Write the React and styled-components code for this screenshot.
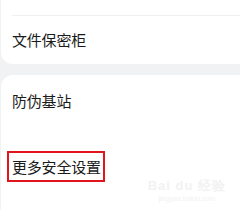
import styled, { createGlobalStyle, css } from "styled-components";

const Global = createGlobalStyle`
html, body {
  margin: 0;
  padding: 0;
  background: #f1f2f4;
  overflow: hidden;
}
body {
  font-family: "Noto Sans CJK SC", "Noto Sans", sans-serif;
}
`

const Page = styled.div`
position: relative;
width: 240px;
height: 210px;
overflow: hidden;
display: flex;
flex-direction: column;
gap: 11px;
`

const Card = styled.div`
background: #ffffff;
margin-left: 1px;
margin-right: -14px;
border-radius: 12px;
display: flex;
flex-direction: column;
flex-shrink: 0;
${( { top } ) => top && css`
margin-top: -31px;
`};
${( { grow } ) => grow && css`
flex-grow: 1;
margin-bottom: -14px;
`};
`

const Row = styled.div`
height: ${( { h } ) => h}px;
display: flex;
align-items: center;
padding-left: 11px;
${( { divided } ) => divided && css`
  border-bottom: 1px solid #f0f0f2;
  margin-left: 11px;
  padding-left: 0;
`};
`

const Label = styled.span`
font-size: 15px;
line-height: 20px;
color: #1b1b1b;
letter-spacing: -0.2px;
${( { marked } ) => marked && css`
  border: 2px solid #e2141c;
  padding: 4px 2px 3px 3px;
  margin-left: -5px;
  margin-top: 2px;
`};
`

const Watermark = styled.div`
position: absolute;
right: 14px;
bottom: 8px;
display: flex;
flex-direction: column;
align-items: center;
color: #f2f2f2;
font-family: "Liberation Sans", sans-serif;
`

const Mark = styled.div`
font-size: 13px;
font-weight: bold;
letter-spacing: 1px;
`

const Url = styled.div`
font-size: 7px;
`

const App = () => {
    return (
        <>
            <Global />
            <Page>
                <Card top>
                    <Row h={46} divided>
                        <Label>应用锁</Label>
                    </Row>
                    <Row h={48}>
                        <Label>文件保密柜</Label>
                    </Row>
                </Card>
                <Card grow>
                    <Row h={52}>
                        <Label>防伪基站</Label>
                    </Row>
                    <Row h={76}>
                        <Label marked>更多安全设置</Label>
                    </Row>
                </Card>
                <Watermark>
                    <Mark>Bai du 经验</Mark>
                    <Url>jingyan.baidu.com</Url>
                </Watermark>
            </Page>
        </>
    )
}
export default App;
